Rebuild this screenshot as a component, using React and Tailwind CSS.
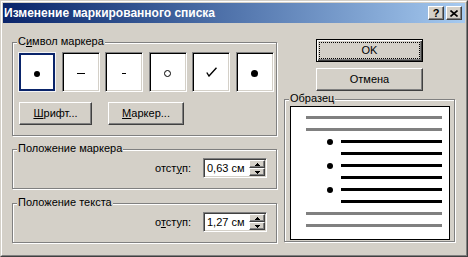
import React from "react";

const raised =
  "border border-t-white border-l-white border-r-[#404040] border-b-[#404040] shadow-[inset_-1px_-1px_0_#808080] bg-[#d4d0c8]";
const sunken =
  "border border-t-[#808080] border-l-[#808080] border-r-white border-b-white shadow-[inset_1px_1px_0_#404040,inset_-1px_-1px_0_#d4d0c8]";

function Group({ label, className = "", children }) {
  return (
    <div className={`relative border border-[#808080] shadow-[1px_1px_0_#fff,inset_1px_1px_0_#fff] ${className}`}>
      <span className="absolute left-[4px] top-[-8px] bg-[#d4d0c8] px-[1px] whitespace-nowrap">{label}</span>
      {children}
    </div>
  );
}

function BulletBox({ selected, children }) {
  if (selected) {
    return (
      <div className="w-[38px] h-[40px] border border-[#f4f4f4] bg-white">
        <div className="h-full border-2 border-[#0a246a] flex items-center justify-center pt-[3px]">{children}</div>
      </div>
    );
  }
  return (
    <div className="w-[38px] h-[40px] bg-white border border-t-[#808080] border-l-[#808080] border-r-white border-b-white shadow-[inset_1px_1px_0_#000,inset_-1px_-1px_0_#d4d0c8] flex items-center justify-center pt-[3px]">
      {children}
    </div>
  );
}

function Arrow({ down }) {
  return (
    <svg width="5" height="3" viewBox="0 0 5 3" shapeRendering="crispEdges">
      <polygon points={down ? "0,0 5,0 2.5,3" : "2.5,0 5,3 0,3"} fill="#000" />
    </svg>
  );
}

function Spinner({ value }) {
  return (
    <div className={`w-[64px] h-[20px] bg-white flex ${sunken} p-[1px]`}>
      <span className="flex-1 pl-[2px] self-center">{value}</span>
      <div className="w-[16px] flex flex-col">
        <div className={`flex-1 flex items-center justify-center ${raised}`}><Arrow /></div>
        <div className={`flex-1 flex items-center justify-center ${raised}`}><Arrow down /></div>
      </div>
    </div>
  );
}

function CaptionBtn({ children }) {
  return (
    <div className={`w-[16px] h-[14px] flex items-center justify-center ${raised}`}>{children}</div>
  );
}

const previewRows = ["g", "g", "d", "b", "d", "b", "d", "b", "g", "g"];

export default function App() {
  return (
    <div className="w-[468px] h-[257px] overflow-hidden bg-[#d4d0c8] border border-t-[#d4d0c8] border-l-[#d4d0c8] border-r-[#404040] border-b-[#404040] font-['Liberation_Sans',Arial,sans-serif] text-[11px] leading-[13px] text-black select-none">
      <div className="h-full border border-t-white border-l-white border-r-[#808080] border-b-[#808080] p-px flex flex-col">
        {/* title bar */}
        <div className="h-[20px] flex items-center bg-linear-to-r from-[#0a246a] to-[#a6caf0] pl-[1px] pr-[3px]">
          <span className="flex-1 font-bold text-white text-[12px]">Изменение маркированного списка</span>
          <div className="flex gap-[2px]">
            <CaptionBtn>
              <span className="font-bold text-[11px] leading-none">?</span>
            </CaptionBtn>
            <CaptionBtn>
              <svg width="8" height="7" viewBox="0 0 8 7">
                <path d="M0.5 0.5 L7.5 6.5 M7.5 0.5 L0.5 6.5" stroke="#000" strokeWidth="1.6" />
              </svg>
            </CaptionBtn>
          </div>
        </div>

        <div className="flex">
          {/* left column */}
          <div className="ml-[9px] mt-[19px] w-[265px]">
            <Group label={<>С<u>и</u>мвол маркера</>} className="h-[94px] pt-[9px] pl-[5px]">
              <div className="w-[256px] flex justify-between">
                <BulletBox selected>
                  <span className="w-[6px] h-[6px] rounded-full bg-black" />
                </BulletBox>
                <BulletBox>
                  <span className="w-[8px] h-px bg-black" />
                </BulletBox>
                <BulletBox>
                  <span className="w-[4px] h-px bg-black" />
                </BulletBox>
                <BulletBox>
                  <span className="w-[7px] h-[7px] rounded-full border border-black" />
                </BulletBox>
                <BulletBox>
                  <svg width="11" height="10" viewBox="0 0 11 10" className="mb-[3px]">
                    <path d="M0.8 5.5 L3 9 L10.5 0.8" stroke="#000" strokeWidth="1.4" fill="none" />
                  </svg>
                </BulletBox>
                <BulletBox>
                  <span className="w-[7px] h-[7px] rounded-full bg-black" />
                </BulletBox>
              </div>
              <div className="flex mt-[10px] pl-[1px]">
                <div className={`w-[73px] h-[23px] flex items-center justify-center ${raised}`}>
                  <span><u>Ш</u>рифт...</span>
                </div>
                <div className={`ml-[16px] w-[76px] h-[23px] flex items-center justify-center ${raised}`}>
                  <span><u>М</u>аркер...</span>
                </div>
              </div>
            </Group>

            <Group label="Положение маркера" className="mt-[13px] h-[40px] flex justify-end items-start pt-[8px] pr-[9px]">
              <div className="flex items-center">
                <span className="mr-[12px]">отст<u>у</u>п:</span>
                <Spinner value="0,63 см" />
              </div>
            </Group>

            <Group label="Положение текста" className="mt-[14px] h-[40px] flex justify-end items-start pt-[8px] pr-[9px]">
              <div className="flex items-center">
                <span className="mr-[12px]">о<u>т</u>ступ:</span>
                <Spinner value="1,27 см" />
              </div>
            </Group>
          </div>

          {/* right column */}
          <div className="ml-[7px] w-[171px]">
            <div className="ml-[32px] mt-[16px] w-[107px] h-[23px] border border-black">
              <div className="h-full p-[2px] shadow-[inset_1px_1px_0_#fff,inset_-1px_-1px_0_#404040,inset_-2px_-2px_0_#808080]">
                <div className="h-full border border-dotted border-black flex items-center justify-center">OK</div>
              </div>
            </div>
            <div className={`ml-[32px] mt-[6px] w-[107px] h-[23px] flex items-center justify-center ${raised}`}>
              Отмена
            </div>

            <Group label="Образец" className="mt-[8px] h-[143px] w-[171px] pl-[5px] pt-[6px]">
              <div className="w-[160px] h-[134px] border border-black bg-white pl-[15px] pt-[9px] pr-[7px] flex flex-col gap-[9px]">
                {previewRows.map((r, i) =>
                  r === "g" ? (
                    <div key={i} className="h-[3px] bg-[#808080]" />
                  ) : r === "b" ? (
                    <div key={i} className="h-[3px] ml-[35px] bg-black" />
                  ) : (
                    <div key={i} className="h-[3px] flex items-center">
                      <span className="ml-[21px] w-[6px] h-[6px] rounded-full bg-black shrink-0" />
                      <span className="ml-[8px] flex-1 h-[3px] bg-black" />
                    </div>
                  )
                )}
              </div>
            </Group>
          </div>
        </div>
      </div>
    </div>
  );
}
